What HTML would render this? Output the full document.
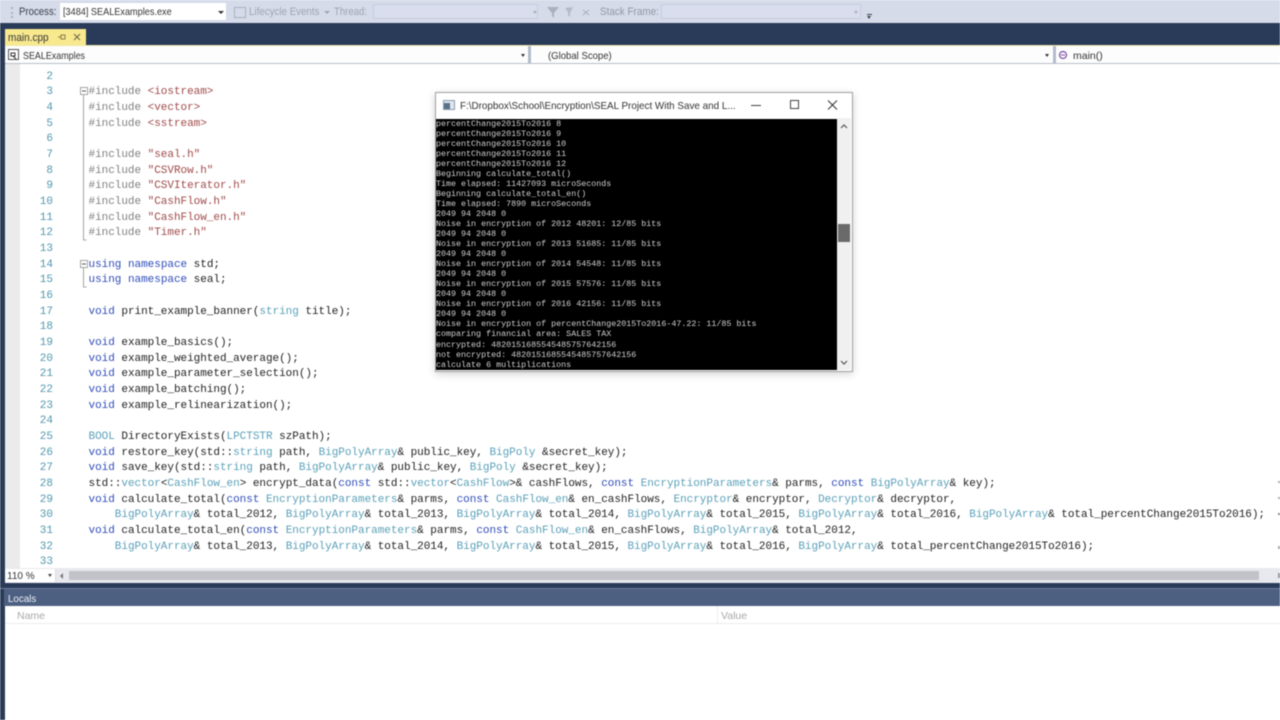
<!DOCTYPE html>
<html><head><meta charset="utf-8">
<style>
html,body{margin:0;padding:0;width:1280px;height:720px;overflow:hidden;background:#fff;font-family:"Liberation Sans",sans-serif;color:#333}
.a{position:absolute}
#root{position:absolute;left:0;top:0;width:1280px;height:720px;overflow:hidden;filter:blur(.45px)}
.t{position:absolute;white-space:pre;font-size:11px;line-height:14px;transform-origin:left center}
pre{margin:0;font-family:"Liberation Mono",monospace}
#code{position:absolute;left:88.5px;top:69.5px;font-size:11px;letter-spacing:-.029px;line-height:15.67px;color:#222}
#nums{position:absolute;left:20px;width:33px;top:69.5px;text-align:right;font-size:11px;line-height:15.67px;color:#4f97ad}
i{font-style:normal}
.k{color:#2f4cb8}.y{color:#5aa0b8}.p{color:#808080}.s{color:#a04a4a}
#con{position:absolute;left:436px;top:119px;width:401px;height:251px;background:#000;overflow:hidden}
#con pre{position:absolute;left:0;top:-.5px;font-size:8.35px;line-height:10.04px;color:#d0d0d0}
</style></head><body>
<div id="root">
<!-- toolbar -->
<div class="a" style="left:0;top:0;width:1280px;height:23px;background:#d6dbe9"></div>
<div class="a" style="left:11px;top:7px;width:3px;height:11px;border-left:2px dotted #aab0c0"></div>
<div class="t" style="left:19px;top:5px;color:#3a3f4a;transform:scaleX(.875)">Process:</div>
<div class="a" style="left:60px;top:3px;width:166px;height:17px;background:#fff"></div>
<div class="t" style="left:63px;top:5px;font-size:10.5px;color:#333;transform:scaleX(.87)">[3484] SEALExamples.exe</div>
<div class="a" style="left:218px;top:11px;border:3px solid transparent;border-top:3px solid #333"></div>
<div class="a" style="left:234px;top:7px;width:10px;height:9px;border:1px solid #aab0bf"></div>
<div class="t" style="left:249px;top:5px;color:#9fa5b5;transform:scaleX(.886)">Lifecycle Events</div>
<div class="a" style="left:324px;top:11px;border:3px solid transparent;border-top:3px solid #9fa5b5"></div>
<div class="t" style="left:334px;top:5px;color:#9fa5b5;transform:scaleX(.87)">Thread:</div>
<div class="a" style="left:373px;top:4px;width:165px;height:15px;background:#d9dded;border:1px solid #c8cddc;box-sizing:border-box"></div>
<div class="a" style="left:533px;top:11px;border:2px solid transparent;border-top:3px solid #a8aebd"></div>
<svg class="a" style="left:545px;top:4px" width="50" height="16"><path d="M2 3h12l-5 6v5l-2-2V9z" fill="#aab0c0"/><path d="M20 4l8-1-3 6v4l-2-2V8z" fill="#b4bac8"/><path d="M38 6l6 5M44 6l-6 5" stroke="#aab0c0" fill="none"/></svg>
<div class="t" style="left:600px;top:5px;color:#9097a8;transform:scaleX(.9)">Stack Frame:</div>
<div class="a" style="left:661px;top:4px;width:200px;height:15px;background:#d9dded;border:1px solid #c8cddc;box-sizing:border-box"></div>
<div class="a" style="left:854px;top:11px;border:2px solid transparent;border-top:3px solid #a8aebd"></div>
<div class="a" style="left:867px;top:14px;width:5px;height:1px;background:#444"></div>
<div class="a" style="left:867px;top:16px;border:2.5px solid transparent;border-top:3px solid #444"></div>
<!-- dark band -->
<div class="a" style="left:0;top:23px;width:1280px;height:23px;background:#2a3b5a"></div>
<div class="a" style="left:0;top:23px;width:5px;height:697px;background:#2a3b5a"></div>
<div class="a" style="left:5px;top:29px;width:81px;height:17px;background:#f8e98f"></div>
<div class="t" style="left:8px;top:31px;font-size:11px;color:#333;transform:scaleX(.91)">main.cpp</div>
<svg class="a" style="left:56px;top:31px" width="30" height="13"><path d="M2 6h3M5 4h4v4H5z" stroke="#8a7d45" fill="none"/><path d="M18 3l6 6M24 3l-6 6" stroke="#6f6a48" stroke-width="1.1" fill="none"/></svg>
<!-- nav bar -->
<div class="a" style="left:5px;top:45px;width:1275px;height:1px;background:#eee9a8"></div>
<div class="a" style="left:5px;top:46px;width:1275px;height:17px;background:#fdfdfd;border-bottom:1px solid #b8bcc6"></div>
<svg class="a" style="left:8px;top:49px" width="12" height="12"><rect x=".5" y=".5" width="10" height="10" fill="#fff" stroke="#555"/><path d="M3 4h4v3H3zM5 7l3 3" stroke="#333" fill="none"/></svg>
<div class="t" style="left:23px;top:48.500px;font-size:10.5px;color:#333;transform:scaleX(.85)">SEALExamples</div>
<div class="a" style="left:521px;top:54px;border:2.5px solid transparent;border-top:3px solid #333"></div>
<div class="a" style="left:528px;top:46px;width:3px;height:17px;background:#b3bccc"></div>
<div class="t" style="left:548px;top:48.500px;font-size:10.5px;color:#333;transform:scaleX(.91)">(Global Scope)</div>
<div class="a" style="left:1045px;top:54px;border:2.5px solid transparent;border-top:3px solid #333"></div>
<div class="a" style="left:1053px;top:46px;width:3px;height:17px;background:#b3bccc"></div>
<svg class="a" style="left:1058px;top:50px" width="10" height="10"><circle cx="5" cy="5" r="3.500" fill="none" stroke="#7a4fa5" stroke-width="1.2"/><path d="M3 5h4" stroke="#7a4fa5"/></svg>
<div class="t" style="left:1073px;top:48.500px;font-size:10.5px;color:#333">main()</div>
<!-- editor -->
<div class="a" style="left:5px;top:64px;width:15px;height:504px;background:#ebebeb"></div>
<pre id="nums">2
3
4
5
6
7
8
9
10
11
12
13
14
15
16
17
18
19
20
21
22
23
24
25
26
27
28
29
30
31
32
33</pre>
<svg class="a" style="left:78px;top:84px" width="12" height="210"><g fill="none" stroke="#a5a5a5"><rect x="2.5" y="3.500" width="7" height="7" fill="#fff"/><path d="M4 7h4" stroke="#555"/><path d="M5.5 11V156h3"/><rect x="2.500" y="176.500" width="7" height="7" fill="#fff"/><path d="M4 180h4" stroke="#555"/><path d="M5.5 184v19h3"/></g></svg>
<pre id="code">

<i class="p">#include</i> <i class="s">&lt;iostream&gt;</i>
<i class="p">#include</i> <i class="s">&lt;vector&gt;</i>
<i class="p">#include</i> <i class="s">&lt;sstream&gt;</i>

<i class="p">#include</i> <i class="s">"seal.h"</i>
<i class="p">#include</i> <i class="s">"CSVRow.h"</i>
<i class="p">#include</i> <i class="s">"CSVIterator.h"</i>
<i class="p">#include</i> <i class="s">"CashFlow.h"</i>
<i class="p">#include</i> <i class="s">"CashFlow_en.h"</i>
<i class="p">#include</i> <i class="s">"Timer.h"</i>

<i class="k">using</i> <i class="k">namespace</i> std;
<i class="k">using</i> <i class="k">namespace</i> seal;

<i class="k">void</i> print_example_banner(<i class="y">string</i> title);

<i class="k">void</i> example_basics();
<i class="k">void</i> example_weighted_average();
<i class="k">void</i> example_parameter_selection();
<i class="k">void</i> example_batching();
<i class="k">void</i> example_relinearization();

<i class="y">BOOL</i> DirectoryExists(<i class="y">LPCTSTR</i> szPath);
<i class="k">void</i> restore_key(std::<i class="y">string</i> path, <i class="y">BigPolyArray</i>&amp; public_key, <i class="y">BigPoly</i> &amp;secret_key);
<i class="k">void</i> save_key(std::<i class="y">string</i> path, <i class="y">BigPolyArray</i>&amp; public_key, <i class="y">BigPoly</i> &amp;secret_key);
std::<i class="y">vector</i>&lt;<i class="y">CashFlow_en</i>&gt; encrypt_data(<i class="k">const</i> std::<i class="y">vector</i>&lt;<i class="y">CashFlow</i>&gt;&amp; cashFlows, <i class="k">const</i> <i class="y">EncryptionParameters</i>&amp; parms, <i class="k">const</i> <i class="y">BigPolyArray</i>&amp; key);
<i class="k">void</i> calculate_total(<i class="k">const</i> <i class="y">EncryptionParameters</i>&amp; parms, <i class="k">const</i> <i class="y">CashFlow_en</i>&amp; en_cashFlows, <i class="y">Encryptor</i>&amp; encryptor, <i class="y">Decryptor</i>&amp; decryptor,
    <i class="y">BigPolyArray</i>&amp; total_2012, <i class="y">BigPolyArray</i>&amp; total_2013, <i class="y">BigPolyArray</i>&amp; total_2014, <i class="y">BigPolyArray</i>&amp; total_2015, <i class="y">BigPolyArray</i>&amp; total_2016, <i class="y">BigPolyArray</i>&amp; total_percentChange2015To2016);
<i class="k">void</i> calculate_total_en(<i class="k">const</i> <i class="y">EncryptionParameters</i>&amp; parms, <i class="k">const</i> <i class="y">CashFlow_en</i>&amp; en_cashFlows, <i class="y">BigPolyArray</i>&amp; total_2012,
    <i class="y">BigPolyArray</i>&amp; total_2013, <i class="y">BigPolyArray</i>&amp; total_2014, <i class="y">BigPolyArray</i>&amp; total_2015, <i class="y">BigPolyArray</i>&amp; total_2016, <i class="y">BigPolyArray</i>&amp; total_percentChange2015To2016);</pre>
<!-- right edge fragments -->
<div class="a" style="left:1278px;top:481px;width:2px;height:2px;background:#aaa"></div>
<div class="a" style="left:1278px;top:497px;width:2px;height:2px;background:#aaa"></div>
<div class="a" style="left:1278px;top:513px;width:2px;height:2px;background:#888"></div>
<div class="a" style="left:1278px;top:546px;width:2px;height:3px;background:#aaa"></div>
<!-- zoom + h-scroll -->
<div class="a" style="left:5px;top:568px;width:1275px;height:15px;background:#e8e9ee"></div>
<div class="a" style="left:5px;top:569px;width:50px;height:13px;background:#fff;border-right:1px solid #ddd"></div>
<div class="t" style="left:7px;top:569.500px;font-size:10px;color:#333">110 %</div>
<div class="a" style="left:48px;top:574px;border:2.5px solid transparent;border-top:3px solid #444"></div>
<div class="a" style="left:60px;top:573px;border:3px solid transparent;border-right:3px solid #777;border-left:0"></div>
<div class="a" style="left:69px;top:571px;width:1190px;height:9px;background:#c2c3c9"></div>
<div class="a" style="left:1278px;top:573px;width:2px;height:5px;background:#999"></div>
<!-- lower panel -->
<div class="a" style="left:0;top:583px;width:1280px;height:5px;background:#2a3b5a"></div>
<div class="a" style="left:0;top:588px;width:1280px;height:1px;background:#6d7d9b"></div>
<div class="a" style="left:4px;top:589px;width:1276px;height:17px;background:#4d6082"></div>
<div class="t" style="left:8px;top:592px;font-size:10.5px;color:#eef1f6;transform:scaleX(.93)">Locals</div>
<div class="a" style="left:5px;top:606px;width:1275px;height:114px;background:#fff"></div>
<div class="t" style="left:17px;top:608.500px;font-size:10.5px;color:#a8a8a8">Name</div>
<div class="t" style="left:721px;top:608.500px;font-size:10.5px;color:#a8a8a8">Value</div>
<div class="a" style="left:5px;top:623px;width:1275px;height:1px;background:#ececec"></div>
<div class="a" style="left:717px;top:606px;width:1px;height:17px;background:#eee"></div>
<!-- console window -->
<div class="a" style="left:435px;top:92px;width:418px;height:280px;background:#fff;border:1px solid #a0a0a0;box-sizing:border-box;box-shadow:0 2px 8px rgba(0,0,0,.18)"></div>
<svg class="a" style="left:443px;top:100px" width="12" height="11"><rect x=".5" y=".5" width="11" height="9" fill="#dfe6ee" stroke="#8a9bb0"/><rect x="1" y="3" width="6" height="6" fill="#5a7288"/></svg>
<div class="t" style="left:460px;top:98.500px;font-size:10.5px;color:#333;transform:scaleX(.94)">F:\Dropbox\School\Encryption\SEAL Project With Save and L...</div>
<svg class="a" style="left:750px;top:98px" width="94" height="14"><path d="M1 7.500h10" stroke="#444"/><rect x="40.500" y="2.500" width="8" height="8" fill="none" stroke="#444"/><path d="M78 2.500l9 9M87 2.500l-9 9" stroke="#333" fill="none"/></svg>
<div id="con"><pre>percentChange2015To2016 8
percentChange2015To2016 9
percentChange2015To2016 10
percentChange2015To2016 11
percentChange2015To2016 12
Beginning calculate_total()
Time elapsed: 11427093 microSeconds
Beginning calculate_total_en()
Time elapsed: 7890 microSeconds
2049 94 2048 0
Noise in encryption of 2012 48201: 12/85 bits
2049 94 2048 0
Noise in encryption of 2013 51685: 11/85 bits
2049 94 2048 0
Noise in encryption of 2014 54548: 11/85 bits
2049 94 2048 0
Noise in encryption of 2015 57576: 11/85 bits
2049 94 2048 0
Noise in encryption of 2016 42156: 11/85 bits
2049 94 2048 0
Noise in encryption of percentChange2015To2016-47.22: 11/85 bits
comparing financial area: SALES TAX
encrypted: 4820151685545485757642156
not encrypted: 4820151685545485757642156
calculate 6 multiplications</pre></div>
<div class="a" style="left:837px;top:118px;width:14px;height:252px;background:#f0f0f0"></div>
<svg class="a" style="left:837px;top:118px" width="14" height="252"><path d="M4 10l3-3 3 3M4 243l3 3 3-3" fill="none" stroke="#555" stroke-width="1.2"/></svg>
<div class="a" style="left:838px;top:224px;width:12px;height:18px;background:#6a6a6a"></div>
</div>
</body></html>
